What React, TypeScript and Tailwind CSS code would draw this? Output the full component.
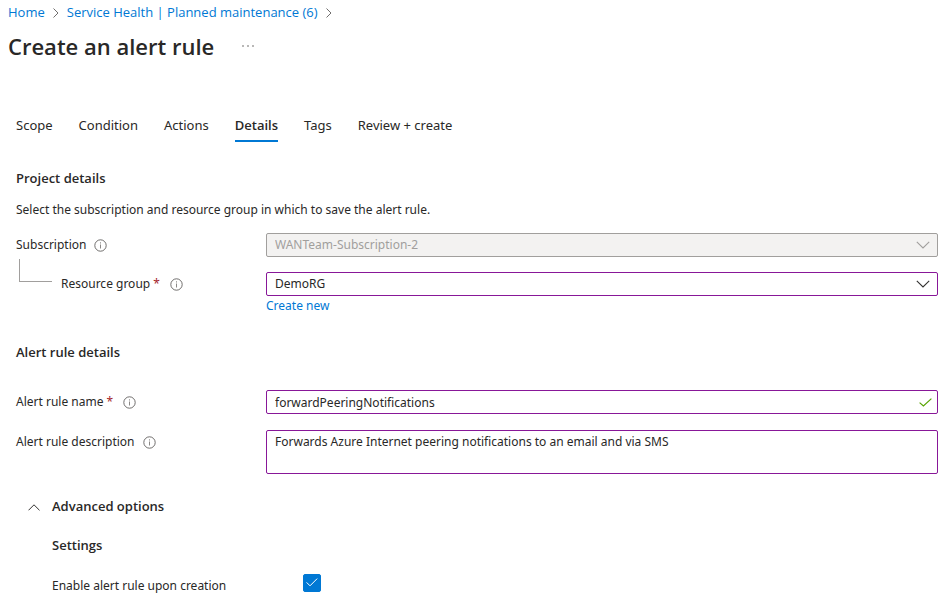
import { useState } from "react";

function InfoIcon() {
  return (
    <svg width="13" height="13" viewBox="0 0 13 13" fill="none" className="mt-px shrink-0" aria-hidden="true">
      <circle cx="6.5" cy="6.5" r="5.7" stroke="#605e5c" strokeWidth="0.9" />
      <path d="M6.5 5.5v4M6.5 3.3v1.2" stroke="#8a8886" />
    </svg>
  );
}

function Crumb() {
  return (
    <svg width="6" height="10" viewBox="0 0 6 10" fill="none" className="mt-0.5 shrink-0" aria-hidden="true">
      <path d="M0.5 0.5L5 5L0.5 9.5" stroke="#605e5c" strokeWidth="0.9" />
    </svg>
  );
}

function ChevronDown({ className }: { className: string }) {
  return (
    <svg
      width="14"
      height="8"
      viewBox="0 0 14 8"
      fill="none"
      className={`pointer-events-none absolute right-2 top-2 ${className}`}
      aria-hidden="true"
    >
      <path d="M0.8 0.8L7 7L13.2 0.8" stroke="currentColor" strokeWidth="1.1" />
    </svg>
  );
}

const tabs = ["Scope", "Condition", "Actions", "Details", "Tags", "Review + create"];
const field = "block w-full rounded-[2px] border px-2 outline-none";
const heading = "font-['Open_Sans',sans-serif] text-[13px] font-semibold";

export default function App() {
  const [active, setActive] = useState("Details");
  const [name, setName] = useState("forwardPeeringNotifications");
  const [description, setDescription] = useState(
    "Forwards Azure Internet peering notifications to an email and via SMS",
  );
  const [enabled, setEnabled] = useState(true);
  const [open, setOpen] = useState(true);

  return (
    <div className="bg-white pb-2 font-['Open_Sans','Noto_Sans',sans-serif] text-[13px] leading-5 text-[#292827]">
      <header className="px-2 pt-0.5">
        <nav aria-label="Breadcrumb" className="flex items-center gap-2 text-[#0078d4]">
          <a href="#home">Home</a>
          <Crumb />
          <a href="#health">Service Health | Planned maintenance (6)</a>
          <Crumb />
        </nav>
        <div className="mt-2 flex items-center gap-7">
          <h1 className="text-[22px] font-semibold leading-8">Create an alert rule</h1>
          <button type="button" aria-label="More actions">
            <svg width="12" height="2" viewBox="0 0 12 2" fill="#605e5c">
              <circle cx="1" cy="1" r="0.8" />
              <circle cx="6" cy="1" r="0.8" />
              <circle cx="11" cy="1" r="0.8" />
            </svg>
          </button>
        </div>
      </header>

      <main className="pl-4 pr-3.5">
        <div role="tablist" className="mt-[53px] flex gap-[26px] font-['Noto_Sans',sans-serif]">
          {tabs.map((tab) => (
            <button
              key={tab}
              type="button"
              role="tab"
              aria-selected={tab === active}
              onClick={() => setActive(tab)}
              className={`border-b-2 pb-[5px] ${
                tab === active
                  ? "border-[#0078d4] font-['Open_Sans',sans-serif] font-semibold"
                  : "border-transparent"
              }`}
            >
              {tab}
            </button>
          ))}
        </div>

        <div className="font-['Noto_Sans',sans-serif] text-xs leading-5">
          <h2 className={`mt-[26px] ${heading}`}>Project details</h2>
          <p className="mt-3">Select the subscription and resource group in which to save the alert rule.</p>

          <div className="mt-[13px] grid grid-cols-[250px_1fr]">
            <div className="flex h-6 items-center gap-2">
              <label htmlFor="subscription">Subscription</label>
              <InfoIcon />
            </div>
            <div className="relative">
              <select
                id="subscription"
                disabled
                className={`${field} h-6 appearance-none border-[#a19f9d] bg-[#f3f2f1] text-[#a19f9d] opacity-100`}
              >
                <option>WANTeam-Subscription-2</option>
              </select>
              <ChevronDown className="text-[#a19f9d]" />
            </div>
          </div>

          <div className="grid grid-cols-[250px_1fr]">
            <div className="flex pl-[3px]">
              <span className="mt-0.5 h-[23px] w-[33px] border-b border-l border-[#a19f9d]" />
              <div className="ml-[9px] mt-[15px] flex h-6 items-center gap-2.5">
                <label htmlFor="group">
                  Resource group <span className="text-[#a4262c]">*</span>
                </label>
                <InfoIcon />
              </div>
            </div>
            <div className="pt-[15px]">
              <div className="relative">
                <select id="group" className={`${field} h-6 appearance-none border-[#881798] bg-white`}>
                  <option>DemoRG</option>
                </select>
                <ChevronDown className="text-[#323130]" />
              </div>
              <a href="#new" className="block w-fit text-[#0078d4]">
                Create new
              </a>
            </div>
          </div>

          <h2 className={`mt-[26px] ${heading}`}>Alert rule details</h2>
          <div className="mt-7 grid grid-cols-[250px_1fr] gap-y-4">
            <div className="flex h-6 items-center gap-2.5">
              <label htmlFor="name">
                Alert rule name <span className="text-[#a4262c]">*</span>
              </label>
              <InfoIcon />
            </div>
            <div className="relative">
              <input
                id="name"
                value={name}
                onChange={(e) => setName(e.target.value)}
                className={`${field} h-6 border-[#881798]`}
              />
              <svg
                width="13"
                height="9"
                viewBox="0 0 13 9"
                fill="none"
                className="pointer-events-none absolute right-1.5 top-2"
                aria-hidden="true"
              >
                <path d="M0.6 4.6L4.4 8L12.4 0.6" stroke="#57a300" strokeWidth="1.2" />
              </svg>
            </div>
            <div className="flex h-6 items-center gap-2">
              <label htmlFor="description">Alert rule description</label>
              <InfoIcon />
            </div>
            <textarea
              id="description"
              value={description}
              onChange={(e) => setDescription(e.target.value)}
              className={`${field} h-11 resize-none border-[#881798] py-px`}
            />
          </div>

          <section className="mt-[22px] pl-3">
            <button
              type="button"
              aria-expanded={open}
              onClick={() => setOpen(!open)}
              className={`flex items-center gap-3 ${heading}`}
            >
              <svg width="12" height="7" viewBox="0 0 12 7" fill="none" className="mt-0.5" aria-hidden="true">
                <path d="M0.5 6.3L6 0.8L11.5 6.3" stroke="#323130" />
              </svg>
              Advanced options
            </button>
            {open && (
              <div className="pl-6">
                <h3 className={`mt-[19px] ${heading}`}>Settings</h3>
                <div className="mt-[19px] grid grid-cols-[251px_1fr]">
                  <label htmlFor="enable" className="pt-0.5">
                    Enable alert rule upon creation
                  </label>
                  <span className="relative size-[18px]">
                    <input
                      id="enable"
                      type="checkbox"
                      checked={enabled}
                      onChange={(e) => setEnabled(e.target.checked)}
                      className="block size-[18px] appearance-none rounded-[2px] border border-[#323130] checked:border-[#0078d4] checked:bg-[#0078d4]"
                    />
                    {enabled && (
                      <svg
                        width="12"
                        height="9"
                        viewBox="0 0 12 9"
                        fill="none"
                        className="pointer-events-none absolute left-[3px] top-1"
                        aria-hidden="true"
                      >
                        <path d="M0.6 4.4L4 7.8L11.2 0.6" stroke="white" strokeWidth="1" />
                      </svg>
                    )}
                  </span>
                </div>
              </div>
            )}
          </section>
        </div>
      </main>
    </div>
  );
}
